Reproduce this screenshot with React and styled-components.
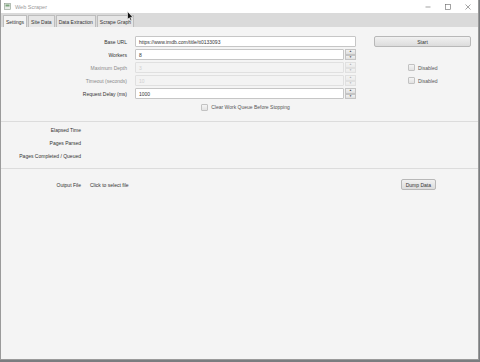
import React from "react";
import styled, { createGlobalStyle } from "styled-components";

const GlobalStyle = createGlobalStyle`
  html, body {
    margin: 0;
    padding: 0;
    width: 480px;
    height: 362px;
    overflow: hidden;
    background: #7a7d80;
  }
  * {
    box-sizing: border-box;
  }
`;

const Window = styled.div`
  position: relative;
  width: 479px;
  height: 360px;
  border: 1px solid #9a9a9a;
  border-top: none;
  background: #f4f4f4;
  display: flex;
  flex-direction: column;
  font-family: "Liberation Sans", Arial, sans-serif;
  font-size: 5px;
  color: #333;
`;

const TitleBar = styled.div`
  height: 13px;
  background: #ffffff;
  display: flex;
  align-items: center;
  padding-left: 3px;
`;

const TitleText = styled.span`
  font-size: 5.5px;
  color: #999;
  margin-left: 4px;
`;

const Controls = styled.div`
  margin-left: auto;
  display: flex;
  align-items: center;
  height: 100%;
`;

const ControlBox = styled.div`
  width: 20px;
  height: 100%;
  display: flex;
  align-items: center;
  justify-content: center;
`;

const TabBar = styled.div`
  height: 14px;
  background: #dadada;
  display: flex;
  align-items: flex-end;
  padding-left: 2px;
  gap: 1px;
`;

const Tab = styled.div`
  height: 12px;
  padding: 0 2px;
  display: flex;
  align-items: center;
  font-size: 5px;
  color: #333;
  background: ${(p) => (p.$active ? "#f4f4f4" : "#e6e6e6")};
  border: 1px solid #bdbdbd;
  border-bottom: none;
  border-radius: 1px 1px 0 0;
`;

const Form = styled.div`
  display: grid;
  grid-template-columns: 126px 229px 115px;
  grid-auto-rows: 11px;
  row-gap: 2px;
  padding-top: 9px;
`;

const Label = styled.div`
  text-align: right;
  align-self: center;
  color: ${(p) => (p.$disabled ? "#8a8a8a" : "#333")};
`;

const FieldCell = styled.div`
  margin-left: 8px;
  display: flex;
  gap: 1px;
`;

const Field = styled.div`
  flex: 1;
  height: 11px;
  display: flex;
  align-items: center;
  padding-left: 3px;
  background: ${(p) => (p.$disabled ? "#f3f3f3" : "#ffffff")};
  border: 1px solid ${(p) => (p.$disabled ? "#e0e0e0" : "#c6c6c6")};
  border-radius: 1px;
  color: ${(p) => (p.$disabled ? "#cfcfcf" : "#333")};
`;

const Spinner = styled.div`
  width: 11px;
  display: flex;
  flex-direction: column;
  opacity: ${(p) => (p.$disabled ? 0.4 : 1)};
`;

const SpinButton = styled.div`
  flex: 1;
  background: linear-gradient(#f2f2f2, #dfdfdf);
  border: 1px solid #c4c4c4;
  display: flex;
  align-items: center;
  justify-content: center;
  font-size: 3px;
  color: #555;
  line-height: 1;
`;

const RightCell = styled.div`
  margin-left: 18px;
  display: flex;
  align-items: center;
`;

const Button = styled.button`
  font-family: inherit;
  font-size: 5px;
  color: #333;
  height: 11px;
  padding: 0 4px;
  background: linear-gradient(#f1f1f1, #dcdcdc);
  border: 1px solid #b8b8b8;
  border-radius: 2px;
  width: ${(p) => p.$width || "auto"};
  cursor: default;
`;

const Check = styled.label`
  display: flex;
  align-items: center;
  gap: 3px;
  margin-left: ${(p) => p.$indent || "0"};
  color: #555;
`;

const Box = styled.span`
  width: 7px;
  height: 7px;
  background: linear-gradient(#f4f4f4, #e2e2e2);
  border: 1px solid #c2c2c2;
  border-radius: 1px;
`;

const CenterRow = styled.div`
  grid-column: 2;
  display: flex;
  justify-content: center;
  margin-left: 8px;
  padding-top: 1px;
`;

const Separator = styled.div`
  height: 1px;
  background: #dcdcdc;
  margin-top: ${(p) => p.$top || "0"};
`;

const Stats = styled.div`
  display: grid;
  grid-template-columns: 80px 1fr;
  grid-auto-rows: 13px;
  column-gap: 9px;
  padding: 1px 0 6px;
`;

const StatLabel = styled.div`
  text-align: right;
  align-self: center;
`;

const OutputRow = styled.div`
  display: grid;
  grid-template-columns: 80px 1fr auto;
  column-gap: 9px;
  align-items: center;
  padding: 10px 42px 0 0;
`;

const Cursor = styled.svg`
  position: absolute;
  left: 126px;
  top: 11px;
`;

function Row({ label, value, disabled, spinner, children }) {
  return (
    <>
      <Label $disabled={disabled}>{label}</Label>
      <FieldCell>
        <Field $disabled={disabled}>{value}</Field>
        {spinner && (
          <Spinner $disabled={disabled}>
            <SpinButton>▲</SpinButton>
            <SpinButton>▼</SpinButton>
          </Spinner>
        )}
      </FieldCell>
      <RightCell>{children}</RightCell>
    </>
  );
}

export default function App() {
  return (
    <>
      <GlobalStyle />
      <Window>
        <TitleBar>
          <svg width="7" height="7" viewBox="0 0 7 7">
            <rect x="0.5" y="0.5" width="6" height="6" fill="#e8ece8" stroke="#8a9a8a" strokeWidth="0.6" />
            <rect x="1.5" y="1.5" width="4" height="2" fill="#7aa37a" />
          </svg>
          <TitleText>Web Scraper</TitleText>
          <Controls>
            <ControlBox>
              <svg width="6" height="6" viewBox="0 0 6 6">
                <line x1="0.5" y1="3" x2="5.5" y2="3" stroke="#666" strokeWidth="0.6" />
              </svg>
            </ControlBox>
            <ControlBox>
              <svg width="6" height="6" viewBox="0 0 6 6">
                <rect x="0.5" y="0.5" width="5" height="5" fill="none" stroke="#666" strokeWidth="0.6" />
              </svg>
            </ControlBox>
            <ControlBox>
              <svg width="6" height="6" viewBox="0 0 6 6">
                <path d="M0.5 0.5 L5.5 5.5 M5.5 0.5 L0.5 5.5" stroke="#666" strokeWidth="0.6" />
              </svg>
            </ControlBox>
          </Controls>
        </TitleBar>
        <TabBar>
          <Tab $active>Settings</Tab>
          <Tab>Site Data</Tab>
          <Tab>Data Extraction</Tab>
          <Tab>Scrape Graph</Tab>
        </TabBar>

        <Form>
          <Row label="Base URL" value="https://www.imdb.com/title/tt0133093">
            <Button $width="97px">Start</Button>
          </Row>
          <Row label="Workers" value="8" spinner />
          <Row label="Maximum Depth" value="3" spinner disabled>
            <Check $indent="34px">
              <Box />
              Disabled
            </Check>
          </Row>
          <Row label="Timeout (seconds)" value="10" spinner disabled>
            <Check $indent="34px">
              <Box />
              Disabled
            </Check>
          </Row>
          <Row label="Request Delay (ms)" value="1000" spinner />
          <CenterRow>
            <Check>
              <Box />
              Clear Work Queue Before Stopping
            </Check>
          </CenterRow>
        </Form>

        <Separator $top="9px" />
        <Stats>
          <StatLabel>Elapsed Time</StatLabel>
          <div />
          <StatLabel>Pages Parsed</StatLabel>
          <div />
          <StatLabel>Pages Completed / Queued</StatLabel>
          <div />
        </Stats>
        <Separator />
        <OutputRow>
          <StatLabel>Output File</StatLabel>
          <div>Click to select file</div>
          <Button>Dump Data</Button>
        </OutputRow>

        <Cursor width="7" height="11" viewBox="0 0 7 11">
          <path d="M0.5 0.5 L0.5 8.5 L2.3 6.8 L3.6 9.8 L4.8 9.3 L3.6 6.4 L6 6.4 Z" fill="#111" stroke="#fff" strokeWidth="0.6" />
        </Cursor>
      </Window>
    </>
  );
}
